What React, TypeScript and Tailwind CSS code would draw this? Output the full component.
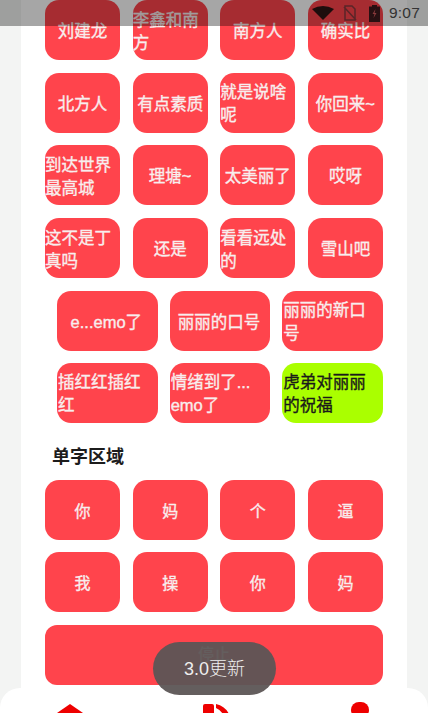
const rowsTop = [
  ["刘建龙", "李鑫和南方", "南方人", "确实比"],
  ["北方人", "有点素质", "就是说啥呢", "你回来~"],
  ["到达世界最高城", "理塘~", "太美丽了", "哎呀"],
  ["这不是丁真吗", "还是", "看看远处的", "雪山吧"],
];

const rowsWide = ["e...emo了", "丽丽的口号", "丽丽的新口号", "插红红插红红", "情绪到了... emo了", "虎弟对丽丽的祝福"];

const singles = ["你", "妈", "个", "逼", "我", "操", "你", "妈"];

function SoundButton({ label, small, lime, wide }: { label: string; small?: boolean; lime?: boolean; wide?: boolean }) {
  return (
    <button
      type="button"
      className={`flex h-[60px] items-center justify-center rounded-[14px] pt-[3px] [-webkit-text-stroke:0.35px] ${
        lime ? "bg-[#aaff00] text-[#1a1a1a]" : "bg-[#ff444c] text-[#f8eeee]"
      } ${small ? "text-[16px]" : "text-[16.5px]"} ${wide ? "pl-px pr-[3px]" : ""}`}
    >
      <span className="text-left leading-[23px]">{label}</span>
    </button>
  );
}

export default function App() {
  return (
    <div
      className="relative flex h-[713px] w-[428px] flex-col overflow-hidden bg-[#f3f4f3]"
      style={{ fontFamily: '"Liberation Sans", "Noto Sans CJK SC", sans-serif' }}
    >
      <main className="mx-[21px] h-[688px] shrink-0 overflow-hidden bg-white px-6">
        <div className="grid grid-cols-4 gap-x-[12.5px] gap-y-[12.7px]">
          {rowsTop.flat().map((label) => (
            <SoundButton key={label} label={label} />
          ))}
        </div>

        <div className="mt-[12.5px] grid grid-cols-3 gap-x-3 gap-y-3 pl-3">
          {rowsWide.map((label, i) => (
            <SoundButton key={label} label={label} lime={i === 5} wide />
          ))}
        </div>

        <h2 className="flex h-[57px] items-center pl-[7px] pt-[8px] text-[18px] font-bold text-[#1c1c1c]">
          <span className="translate-y-[2px]">单字区域</span>
        </h2>

        <div className="grid grid-cols-4 gap-x-[12.5px] gap-y-3">
          {singles.map((label, i) => (
            <SoundButton key={i} label={label} small />
          ))}
        </div>

        <button
          type="button"
          className="mt-[13px] flex h-[60px] w-full items-center justify-center rounded-[12px] bg-[#ff444c] text-[16px] font-medium text-[#f8eeee]"
        >
          停止
        </button>
      </main>

      <nav className="relative flex flex-1 justify-between rounded-t-[20px] bg-white pl-[57px] pr-[59px] pt-[16px]">
        <svg width="26" height="24" viewBox="0 0 26 24" fill="#ee0000">
          <path d="M13 0 L26 9 V24 H0 V9 Z" />
        </svg>
        <svg width="28" height="24" viewBox="0 0 28 24" fill="#ee0000">
          <path d="M0 2 Q0 0 2 0 H9 Q11 0 11 2 V24 H0 Z" />
          <path d="M13 0 Q22 2 26 10 L21 12 Q18 6 13 4 Z" />
        </svg>
        <svg width="18" height="24" viewBox="0 0 18 24" fill="#ee0000" className="-mt-[2px]">
          <rect x="0" y="0" width="18" height="16" rx="8" />
        </svg>
      </nav>

      <div className="absolute inset-x-0 top-0 flex h-[26px] items-center justify-end bg-[#000000]/35 pr-[8px]">
        <svg width="22" height="14" viewBox="0 0 22 14" fill="#1d0d0d" className="mr-[9px]">
          <path d="M0 3 Q11 -3 22 3 L11 14 Z" />
        </svg>
        <svg width="14" height="16" viewBox="0 0 14 16" fill="none" stroke="#5a2528" strokeWidth="1.5" className="mr-[12px]">
          <path d="M2 1 H9 L12 4 V15 H2 Z M1 2 L13 15" />
        </svg>
        <svg width="11" height="17" viewBox="0 0 11 17" className="mr-[9px]">
          <path d="M3 0 H8 V1.5 H11 V17 H0 V1.5 H3 Z" fill="#281012" />
          <path d="M6.5 4 L3.5 9 H5.5 L4.5 13 L7.5 8 H5.5 Z" fill="#8a3a3c" />
        </svg>
        <span className="text-[15.5px] font-medium tracking-[0.2px] text-[#333333]">9:07</span>
      </div>

      <div className="absolute left-[153px] top-[642px] flex h-[53px] w-[123px] items-center justify-center rounded-[27px] bg-[#5c5555]/95 pt-[2px] text-[18px] font-light text-[#eeeeee]">
        3.0更新
      </div>
    </div>
  );
}
